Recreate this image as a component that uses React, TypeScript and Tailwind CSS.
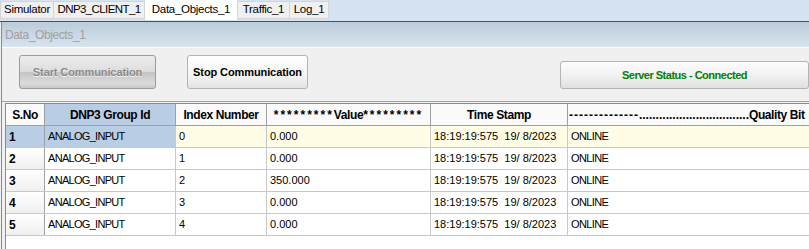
import React from "react";

const rows = [
  { n: "1", idx: "0", val: "0.000" },
  { n: "2", idx: "1", val: "0.000" },
  { n: "3", idx: "2", val: "350.000" },
  { n: "4", idx: "3", val: "0.000" },
  { n: "5", idx: "4", val: "0.000" },
];

export default function App() {
  const font = { fontFamily: '"Liberation Sans", Arial, sans-serif' };
  return (
    <div
      className="w-[809px] h-[249px] overflow-hidden bg-[#f0f0f0] text-black flex flex-col"
      style={font}
    >
      {/* Tab bar */}
      <div className="h-[21px] bg-[#d6e3f0] flex items-start shrink-0">
        <div className="mt-[1px] w-[54px] h-[18px] flex items-center justify-center border border-[#d4d4d4] bg-[#f0f0f0] text-[11.5px] tracking-[-0.3px]">Simulator</div>
        <div className="mt-[1px] w-[91px] h-[18px] flex items-center justify-center border border-l-0 border-[#d4d4d4] bg-[#f0f0f0] text-[11.5px] tracking-[-0.6px]">DNP3_CLIENT_1</div>
        <div className="w-[92px] h-[20px] flex items-center justify-center bg-white text-[11.5px] tracking-[-0.3px]">Data_Objects_1</div>
        <div className="mt-[1px] w-[53px] h-[18px] flex items-center justify-center border border-[#d4d4d4] bg-[#f0f0f0] text-[11.5px] tracking-[-0.3px]">Traffic_1</div>
        <div className="mt-[1px] w-[39px] h-[18px] flex items-center justify-center border border-l-0 border-[#d4d4d4] bg-[#f0f0f0] text-[11.5px] tracking-[-0.3px]">Log_1</div>
      </div>
      <div className="h-[1px] bg-[#505050] shrink-0" />
      {/* Content frame */}
      <div className="flex-1 ml-[1px] border-l border-[#8a8a8a] flex flex-col min-h-0">
        {/* Title bar */}
        <div className="h-[26px] shrink-0 bg-[linear-gradient(to_bottom,#bccbd9,#d8e4f0)] border-b border-white flex items-center pl-[3px]">
          <span className="text-[12px] tracking-[-0.4px] text-[#a0a0a0]">Data_Objects_1</span>
        </div>
        {/* Buttons */}
        <div className="h-[53px] shrink-0 flex items-start">
          <div className="ml-[17px] mt-[7px] w-[137px] h-[34px] rounded-[3px] border border-[#9a9a9a] bg-[linear-gradient(to_bottom,#ececec_0%,#dedede_48%,#c4c4c4_52%,#dcdcdc_85%,#c8c8c8_100%)] flex items-center justify-center text-[11px] font-bold tracking-[-0.1px] text-[#8a8a8a] [text-shadow:0_1px_0_#f4f4f4]">
            Start Communication
          </div>
          <div className="ml-[31px] mt-[7px] w-[121px] h-[34px] rounded-[3px] border border-[#b4b4b4] bg-[linear-gradient(to_bottom,#ffffff_0%,#f7f7f7_50%,#e4e4e4_100%)] flex items-center justify-center text-[11px] font-bold tracking-[-0.1px] text-black">
            Stop Communication
          </div>
          <div className="ml-[252px] mt-[13px] w-[249px] h-[28px] rounded-[3px] border border-[#b4b4b4] bg-[linear-gradient(to_bottom,#fcfcfc_0%,#f2f2f2_50%,#e0e0e0_100%)] flex items-center justify-center text-[11px] font-bold tracking-[-0.5px] text-[#008000]">
            Server Status - Connected
          </div>
        </div>
        {/* Table area */}
        <div className="flex-1 min-h-0 border-t border-[#a0a0a0] pt-[1px] pl-[3px]">
          <div className="h-full border-l border-t border-[#8c8c8c] bg-white overflow-hidden">
            <div className="flex h-[22px] border-b border-[#a0a0a0] text-[12px] font-bold whitespace-nowrap tracking-[-0.4px]">
              <div className="w-[39px] shrink-0 bg-[#fafafa] border-r border-[#a0a0a0] flex items-center justify-center">S.No</div>
              <div className="w-[131px] shrink-0 bg-[#b9cde5] border-r border-[#a0a0a0] flex items-center justify-center">DNP3 Group Id</div>
              <div className="w-[91px] shrink-0 bg-[#fafafa] border-r border-[#a0a0a0] flex items-center justify-center">Index Number</div>
              <div className="w-[164px] shrink-0 bg-[#fafafa] border-r border-[#a0a0a0] flex items-center justify-center overflow-hidden">
                <span className="tracking-[2px]">*********</span>Value<span className="tracking-[2px]">*********</span>
              </div>
              <div className="w-[137px] shrink-0 bg-[#fafafa] border-r border-[#a0a0a0] flex items-center justify-center">Time Stamp</div>
              <div className="w-[300px] shrink-0 bg-[#fafafa] flex items-center pl-[1px] overflow-hidden">
                <span className="tracking-[1px]">--------------</span>
                <span className="tracking-[0px]">.................................</span>
                <span>Quality Bit</span>
              </div>
            </div>
            {rows.map((r, i) => {
              const sel = i === 0;
              const cell = sel ? "bg-[#fffde6]" : "bg-white";
              return (
                <div key={r.n} className="flex h-[22px] border-b border-[#c8c8c8] text-[11px] whitespace-nowrap">
                  <div className={`w-[39px] shrink-0 border-r border-[#a0a0a0] flex items-center pl-[3px] text-[12px] font-bold ${sel ? "bg-[#b9cde5]" : "bg-[linear-gradient(to_bottom,#ffffff,#f0f0f0)]"}`}>{r.n}</div>
                  <div className={`w-[131px] shrink-0 border-r border-[#c8c8c8] flex items-center pl-[3px] tracking-[-0.7px] ${sel ? "bg-[#b9cde5]" : "bg-white"}`}>ANALOG_INPUT</div>
                  <div className={`w-[91px] shrink-0 border-r border-[#c8c8c8] flex items-center pl-[3px] ${cell}`}>{r.idx}</div>
                  <div className={`w-[164px] shrink-0 border-r border-[#c8c8c8] flex items-center pl-[3px] ${cell}`}>{r.val}</div>
                  <div className={`w-[137px] shrink-0 border-r border-[#c8c8c8] flex items-center pl-[3px] ${cell}`}>18:19:19:575&nbsp; 19/ 8/2023</div>
                  <div className={`w-[300px] shrink-0 flex items-center pl-[3px] tracking-[-0.6px] ${cell}`}>ONLINE</div>
                </div>
              );
            })}
          </div>
        </div>
      </div>
    </div>
  );
}
